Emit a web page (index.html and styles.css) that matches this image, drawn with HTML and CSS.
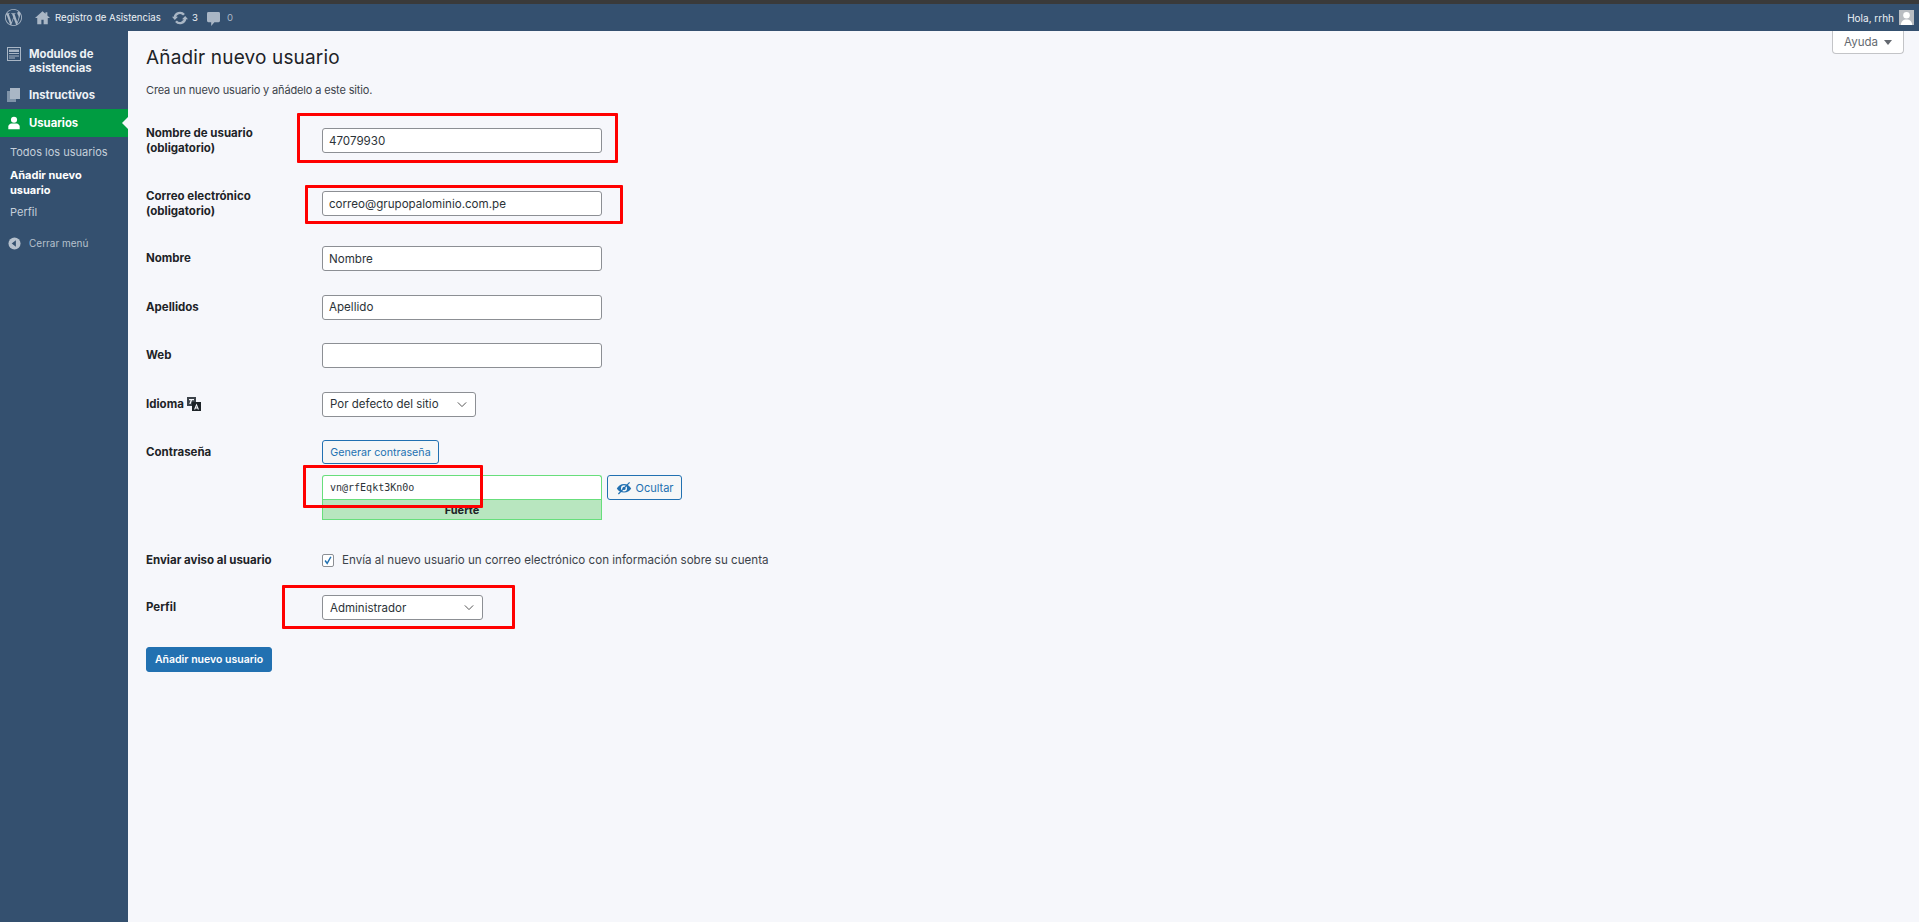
FILE: index.html
```html
<!DOCTYPE html>
<html lang="es">
<head>
<meta charset="utf-8">
<title>Añadir nuevo usuario</title>
<link rel="stylesheet" href="styles.css">
</head>
<body>
<div class="strip"></div>
<header class="bar">
  <svg class="wp" viewBox="0 0 24 24"><path d="M21.469 6.825c.84 1.537 1.318 3.3 1.318 5.175 0 3.979-2.156 7.456-5.363 9.325l3.295-9.527c.615-1.54.82-2.771.82-3.864 0-.405-.026-.78-.07-1.11m-7.981.105c.647-.03 1.232-.105 1.232-.105.582-.075.514-.93-.067-.899 0 0-1.755.135-2.88.135-1.064 0-2.85-.15-2.85-.15-.585-.03-.661.855-.075.885 0 0 .54.061 1.125.09l1.68 4.605-2.37 7.08L5.354 6.9c.649-.03 1.234-.1 1.234-.1.585-.075.516-.93-.065-.896 0 0-1.746.138-2.874.138-.2 0-.438-.008-.69-.015C4.911 3.15 8.235 1.215 12 1.215c2.809 0 5.365 1.072 7.286 2.833-.046-.003-.091-.009-.141-.009-1.06 0-1.812.923-1.812 1.914 0 .89.513 1.643 1.06 2.531.411.72.89 1.643.89 2.977 0 .915-.354 1.994-.821 3.479l-1.075 3.585-3.9-11.61.001.014zM12 22.784c-1.059 0-2.081-.153-3.048-.437l3.237-9.406 3.315 9.087c.024.053.05.101.078.149-1.12.393-2.325.609-3.582.609M1.211 12c0-1.564.336-3.05.935-4.39L7.29 21.709C3.694 19.96 1.212 16.271 1.211 12M12 0C5.385 0 0 5.385 0 12s5.385 12 12 12 12-5.385 12-12S18.615 0 12 0"/></svg>
  <svg class="home" viewBox="0 0 20 20"><path d="M10 1.500 0 10.500h3V19h5.500v-6h3v6H17v-8.500h3l-3.500-3.200V3H14v2z"/></svg>
  <span class="site">Registro de Asistencias</span>
  <svg class="upd" viewBox="0 0 20 20"><path class="ring" d="M3.500 9.500A6.500 6.500 0 0 1 15 6"/><path class="ring" d="M16.500 10.500A6.500 6.500 0 0 1 5 14"/><path d="M0 8.500h7.500L3.500 12.500zM20 11.500h-7.500l4-4z"/></svg>
  <span class="count">3</span>
  <svg class="cmt" viewBox="0 0 14 15"><path d="M1.500 0h11A1.500 1.500 0 0 1 14 1.500v8a1.500 1.500 0 0 1-1.500 1.500H8L4.500 15v-4h-3A1.500 1.500 0 0 1 0 9.500v-8A1.500 1.500 0 0 1 1.500 0z"/></svg>
  <span class="count dim">0</span>
  <span class="hello">Hola, rrhh</span>
  <span class="avatar"><svg viewBox="0 0 16 16"><circle cx="8" cy="5.500" r="3.500"/><path d="M2 16c0-4 2.500-6 6-6s6 2 6 6z"/></svg></span>
</header>
<div class="shell">
  <nav class="side">
    <a class="item two">
      <svg class="ico" viewBox="0 0 14 14"><path fill-rule="evenodd" d="M0 0h14v14H0zm1 1v12h12V1zm1 1.500h10V5H2zm0 3.500h10v1H2zm0 2.500h10v1H2zm0 2h6v1H2z"/></svg>
      <span>Modulos de asistencias</span>
    </a>
    <a class="item">
      <svg class="ico" viewBox="0 0 14 14"><path class="pg" d="M0 3h3v8h6v3H0z"/><path d="M3 0h10v11H3z"/></svg>
      <span>Instructivos</span>
    </a>
    <a class="item current">
      <svg class="ico white" viewBox="0 0 16 16"><circle cx="8" cy="4.300" r="3.500"/><path d="M1.500 15v-3c0-2 2-3.500 3.500-3.500h6c1.500 0 3.500 1.500 3.500 3.500v3z"/></svg>
      <span>Usuarios</span>
    </a>
    <ul class="sub">
      <li>Todos los usuarios</li>
      <li class="on">Añadir nuevo usuario</li>
      <li>Perfil</li>
    </ul>
    <a class="collapse">
      <svg class="cico" viewBox="0 0 14 14"><circle cx="7" cy="7" r="6.500"/><path class="arrow" d="M8.500 3.500v7L4 7z"/></svg>
      <span>Cerrar menú</span>
    </a>
  </nav>
  <main class="main">
    <div class="help">Ayuda <i class="caret"></i></div>
    <h1>Añadir nuevo usuario</h1>
    <p class="intro">Crea un nuevo usuario y añádelo a este sitio.</p>
    <form class="form">
      <div class="row r1"><label>Nombre de usuario<br>(obligatorio)</label><input class="text" value="47079930"></div>
      <div class="row r2"><label>Correo electrónico<br>(obligatorio)</label><input class="text" value="correo@grupopalominio.com.pe"></div>
      <div class="row"><label>Nombre</label><input class="text" value="Nombre"></div>
      <div class="row"><label>Apellidos</label><input class="text" value="Apellido"></div>
      <div class="row"><label>Web</label><input class="text" value=""></div>
      <div class="row"><label class="lang">Idioma
        <svg class="tr" viewBox="0 0 14 14"><path class="b1" d="M0 0h9v9H0z"/><path class="g" d="M2 2h5v1.200H5L3.600 7H2.300l1.300-3.800H2z"/><path class="b2" d="M5 5h9v9H5z"/><path class="g" d="M9.500 6.500 7 12.500h1.200l.4-1h1.800l.4 1H12zM9 10.500l.5-1.500.5 1.500z"/></svg></label>
        <select class="sel s-lang"><option>Por defecto del sitio</option></select></div>
      <div class="row pass">
        <label>Contraseña</label>
        <div class="pw">
          <button type="button" class="btn gen">Generar contraseña</button>
          <div class="pwline">
            <div class="pwbox">
              <input class="pwin" value="vn@rfEqkt3Kn0o">
              <div class="strength">Fuerte</div>
            </div>
            <button type="button" class="btn hide">
              <svg class="eye" viewBox="0 0 20 20"><path d="M10 5C6 5 3 7.500 1 10.500c2 3 5 5 9 5s7-2 9-5c-2-3-5-5.500-9-5.500zm0 1.700a3.800 3.800 0 1 1 0 7.600 3.800 3.800 0 0 1 0-7.600z" fill-rule="evenodd"/><circle cx="10" cy="10.500" r="2"/><path class="slash" d="M3 17.500 17 3"/></svg>
              Ocultar
            </button>
          </div>
        </div>
      </div>
      <div class="row notify"><label>Enviar aviso al usuario</label><div class="chk"><input type="checkbox" class="cb" checked><span>Envía al nuevo usuario un correo electrónico con información sobre su cuenta</span></div></div>
      <div class="row role"><label>Perfil</label><select class="sel s-role"><option>Administrador</option></select></div>
      <button type="button" class="primary">Añadir nuevo usuario</button>
    </form>
    <div class="mark m1"></div>
    <div class="mark m2"></div>
    <div class="mark m3"></div>
    <div class="mark m4"></div>
  </main>
</div>
</body>
</html>
```
FILE: styles.css
```css
* { box-sizing: border-box; }
html, body { margin: 0; height: 100%; }
body {
  display: flex;
  flex-direction: column;
  height: 922px;
  overflow: hidden;
  font-family: Inter, "Open Sans", "Liberation Sans", sans-serif;
  font-size: 11px;
  color: #2c3338;
  background: #f6f7fb;
}
.strip { height: 4px; background: #3a3a3a; flex: none; }
.bar {
  height: 27px;
  flex: none;
  display: flex;
  align-items: center;
  background: #34506f;
  color: #eef2f6;
  font-size: 9.600px;
  padding-left: 5px;
}
.wp { width: 17px; height: 17px; fill: #a9b6c5; }
.home { width: 15px; height: 15px; fill: #a9b6c5; margin-left: 13px; }
.site { margin-left: 5px; width: 113px; white-space: nowrap; }
.upd { width: 16px; height: 16px; fill: #a9b6c5; margin-left: 4px; }
.upd .ring { fill: none; stroke: #a9b6c5; stroke-width: 3; }
.count { margin-left: 4px; width: 15px; }
.cmt { width: 13px; height: 14px; fill: #a9b6c5; margin-top: 2px; }
.count.dim { color: #a9b6c5; margin-left: 7px; }
.hello { margin-left: auto; white-space: nowrap; font-size: 10px; }
.avatar {
  width: 15px; height: 15px; margin: 0 5px 0 5px;
  background: #b9bdc2; display: flex;
}
.avatar svg { width: 15px; height: 15px; fill: #fff; }

.shell { flex: 1; display: flex; min-height: 0; }
.side {
  width: 128px; flex: none;
  background: #34506f;
  color: #eef2f6;
  padding-top: 16px;
  font-size: 11.300px;
}
.item {
  display: flex;
  align-items: center;
  gap: 8px;
  padding: 0 7px;
  font-weight: 700;
  line-height: 14px;
  height: 28px;
  position: relative;
}
.item.two { height: 28px; align-items: flex-start; margin-bottom: 6px; }
.item.two span { width: 90px; }
.ico { width: 14px; height: 14px; fill: #a9b6c5; flex: none; }
.ico .pg { fill: #7f93a8; }
.ico.white { fill: #fff; }
.item.current { background: #009c41; color: #fff; }
.item.current::after {
  content: "";
  position: absolute;
  right: 0; top: 8px;
  border: 6px solid transparent;
  border-right-color: #f6f7fb;
  border-left-width: 0;
}
.sub {
  list-style: none;
  margin: 0;
  padding: 8px 10px 0;
  font-size: 11px;
  line-height: 15px;
  color: #c5cfda;
}
.sub li { padding: 0 0 7.500px; }
.sub .on { color: #fff; font-weight: 700; }
.collapse {
  display: flex;
  align-items: center;
  gap: 8px;
  margin-top: 9px;
  padding-left: 8px;
  color: #b6c1cd;
  font-size: 10px;
}
.cico { width: 13px; height: 13px; fill: #b6c1cd; }
.cico .arrow { fill: #34506f; }

.main {
  flex: 1;
  position: relative;
  padding: 0 18px;
}
.help {
  position: absolute;
  top: 0; right: 15px;
  width: 72px; height: 23px;
  background: #fff;
  border: 1px solid #c3c4c7;
  border-top: 0;
  border-radius: 0 0 4px 4px;
  color: #646970;
  font-size: 11.500px;
  display: flex;
  align-items: center;
  justify-content: center;
  gap: 6px;
}
.caret {
  border: 4px solid transparent;
  border-top: 5px solid #646970;
  border-bottom: 0;
}
h1 {
  margin: 15px 0 0;
  font-size: 19px;
  font-weight: 400;
  letter-spacing: .16px;
  line-height: 24px;
  color: #1d2327;
}
.intro { margin: 12px 0 0; font-size: 11px; letter-spacing: -.15px; line-height: 16px; color: #3c434a; }
.form { margin-top: 27.500px; }
.row {
  display: grid;
  grid-template-columns: 176px 1fr;
  align-items: center;
  padding: 12px 0 11.500px;
  justify-items: start;
}
.row label { font-weight: 700; font-size: 11.500px; line-height: 15px; color: #1d2327; }
.r1 { padding-top: 0; padding-bottom: 21px; }
.r2 { padding-top: 12px; padding-bottom: 15.500px; }
.text {
  width: 280px; height: 25px;
  border: 1px solid #8c8f94;
  border-radius: 3px;
  background: #fff;
  padding: 0 6px;
  font: inherit;
  font-size: 11.600px;
  color: #2c3338;
}
.sel {
  appearance: none;
  height: 25px;
  border: 1px solid #8c8f94;
  border-radius: 3px;
  padding: 0 7px;
  font: inherit;
  font-size: 11.500px;
  color: #2c3338;
  background: #fff url("data:image/svg+xml,%3Csvg xmlns='http://www.w3.org/2000/svg' viewBox='0 0 12 8'%3E%3Cpath d='M1 1.500 6 6.500l5-5' fill='none' stroke='%23555' stroke-width='1.200'/%3E%3C/svg%3E") no-repeat right 8px center / 10px 7px;
}
.s-lang { width: 154px; }
.s-role { width: 161px; }
.row .lang { display: flex; align-items: center; gap: 3px; }
.tr { width: 14px; height: 14px; }
.tr .b1 { fill: #3c434a; }
.tr .b2 { fill: #1d2327; }
.tr .g { fill: #f6f7fb; }
.pass { align-items: start; padding-bottom: 0; }
.pass label { padding-top: 5px; }
.btn {
  height: 24px;
  border: 1px solid #2271b1;
  border-radius: 3px;
  background: #f6f7f7;
  color: #2271b1;
  font: inherit;
  font-size: 10.700px;
  padding: 0;
}
.gen { width: 117px; display: block; }
.pwline { display: flex; gap: 5px; margin-top: 11px; align-items: flex-start; }
.pwbox { width: 280px; }
.pwin {
  display: block;
  width: 100%;
  height: 24px;
  border: 1px solid #68de7c;
  border-bottom: 0;
  border-radius: 3px 3px 0 0;
  background: #fff;
  padding: 0 7px;
  font-family: "DejaVu Sans Mono", "Liberation Mono", monospace;
  font-size: 10px;
  color: #2c3338;
}
.strength {
  height: 21px;
  background: #b8e6bf;
  border: 1px solid #68de7c;
  text-align: center;
  font-weight: 700;
  font-size: 11px;
  line-height: 20px;
  color: #1d2327;
}
.hide {
  width: 75px; height: 25px;
  display: flex;
  align-items: center;
  justify-content: center;
  gap: 4px;
  font-size: 11px;
}
.eye { width: 16px; height: 16px; fill: #2271b1; flex: none; }
.eye .slash { stroke: #2271b1; stroke-width: 1.500; fill: none; }
.row.notify { padding: 32.500px 0 0; }
.row.role { padding: 27.500px 0 0; }
.chk { display: flex; align-items: center; gap: 8px; font-size: 11.600px; color: #3c434a; }
.cb {
  appearance: none;
  margin: 0;
  width: 12px; height: 13px;
  border: 1px solid #8c8f94;
  border-radius: 2px;
  background: #fff url("data:image/svg+xml,%3Csvg xmlns='http://www.w3.org/2000/svg' viewBox='0 0 12 13'%3E%3Cpath d='M2.500 6.500 5 10l4.500-8' fill='none' stroke='%232271b1' stroke-width='1.800'/%3E%3C/svg%3E") no-repeat center / contain;
}
.primary {
  display: block;
  margin-top: 27px;
  width: 126px; height: 25px;
  border: 1px solid #2271b1;
  border-radius: 3px;
  background: #2271b1;
  color: #fff;
  font: inherit;
  font-size: 10.500px;
  font-weight: 600;
  padding: 0;
}
.mark {
  position: absolute;
  border: 3px solid #f00;
  border-radius: 1px;
  pointer-events: none;
}
.m1 { left: 169px; top: 82px; width: 321px; height: 50px; }
.m2 { left: 177px; top: 154px; width: 318px; height: 39px; }
.m3 { left: 175px; top: 434px; width: 180px; height: 43px; }
.m4 { left: 154px; top: 554px; width: 233px; height: 44px; }
```
